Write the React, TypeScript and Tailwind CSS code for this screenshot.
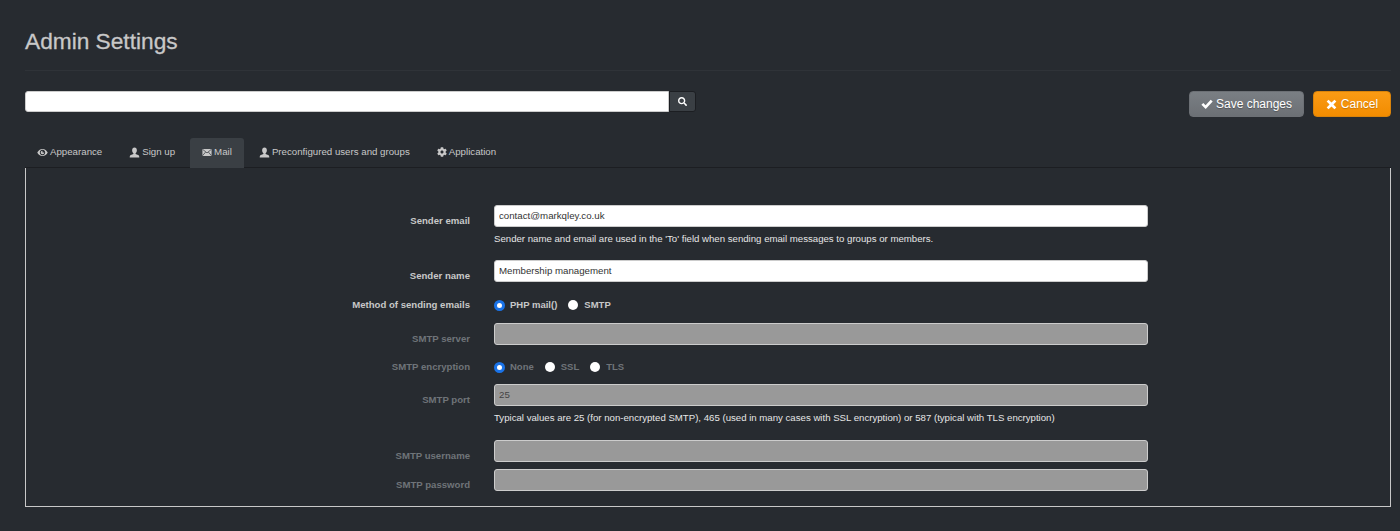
import { FaCog, FaSearch } from 'react-icons/fa';
import type { ReactNode } from 'react';

function EyeIcon() {
  return (
    <svg viewBox="0 0 12 10" className="h-[9px] w-[11px]" fill="currentColor">
      <path d="M6 1C3.400 1 1.300 2.800.2 5c1.100 2.200 3.200 4 5.800 4s4.700-1.800 5.800-4C10.700 2.800 8.600 1 6 1zm0 7C4.300 8 3 6.700 3 5s1.300-3 3-3 3 1.300 3 3-1.300 3-3 3z" />
      <path d="M6 3a2 2 0 1 0 2 2H6z" />
    </svg>
  );
}

function UserIcon() {
  return (
    <svg viewBox="0 0 12 12" className="size-[11px]" fill="currentColor">
      <path d="M6 .5c1.700 0 2.600 1.300 2.600 3 0 1.400-.6 2.600-1.400 3.200v.9c1.800.6 4 1 4 2.900v1H.8v-1c0-1.900 2.200-2.300 4-2.900v-.9C4 6.100 3.400 4.900 3.400 3.500c0-1.700.9-3 2.600-3z" />
    </svg>
  );
}

function MailIcon() {
  return (
    <svg viewBox="0 0 12 10" className="h-[9px] w-[10px]">
      <rect x="0.5" y="0.8" width="11" height="8.4" fill="currentColor" />
      <path d="M.5 1 6 5.500 11.500 1M.5 9 4.300 4.500M11.500 9 7.700 4.500" fill="none" stroke="#3a3f44" strokeWidth="0.9" />
    </svg>
  );
}

function CheckIcon() {
  return (
    <svg viewBox="0 0 12 12" className="size-[12px]" fill="currentColor">
      <path d="M.4 6.800 2.300 4.900 4.600 7.200 9.700 1.700 11.700 3.600 4.700 11z" />
    </svg>
  );
}

function RemoveIcon() {
  return (
    <svg viewBox="0 0 12 12" className="size-[11px]" fill="currentColor">
      <path d="M2.800.7 6 3.900 9.200.7l2.100 2.100L8.100 6l3.200 3.200-2.100 2.100L6 8.100l-3.200 3.200-2.100-2.100L3.900 6 .7 2.800z" />
    </svg>
  );
}

const tabs = [
  { label: 'Appearance', icon: <EyeIcon /> },
  { label: 'Sign up', icon: <UserIcon /> },
  { label: 'Mail', icon: <MailIcon />, active: true },
  { label: 'Preconfigured users and groups', icon: <UserIcon /> },
  { label: 'Application', icon: <FaCog className="size-[10px]" /> },
];

function Row({ label, disabled, inline, className, children }: { label: string; disabled?: boolean; inline?: boolean; className?: string; children: ReactNode }) {
  return (
    <div className={`grid grid-cols-[444px_654px] gap-x-6 ${className ?? ''}`}>
      <label className={`text-right text-[9.6px] font-bold ${inline ? 'leading-[14px]' : 'pt-[9px] leading-[13px]'} ${disabled ? 'text-[#6f7479]' : 'text-[#c8c8c8]'}`}>{label}</label>
      <div>{children}</div>
    </div>
  );
}

function TextInput({ value, disabled }: { value?: string; disabled?: boolean }) {
  return (
    <input
      readOnly
      disabled={disabled}
      value={value ?? ''}
      className={`block h-[22px] w-full rounded-[3px] border border-[#cccccc] px-[4px] pb-[2px] text-[9.7px] ${disabled ? 'bg-[#999999] text-[#444444]' : 'bg-white text-[#333333]'}`}
    />
  );
}

function Radio({ label, checked, disabled }: { label: string; checked?: boolean; disabled?: boolean }) {
  return (
    <span className={`flex items-center ${checked ? 'gap-[5px]' : 'gap-[6px]'}`}>
      {checked ? (
        <span className="size-[11px] rounded-full border-[3px] border-[#1a73e8] bg-white" />
      ) : (
        <span className="size-[10px] rounded-full bg-white" />
      )}
      <span className={`text-[9.5px] font-bold ${disabled ? 'text-[#6f7479]' : 'text-[#c8c8c8]'}`}>{label}</span>
    </span>
  );
}

export default function App() {
  return (
    <div className="min-h-[531px] bg-[#272b30] font-['Liberation_Sans',Arial,sans-serif]">
      <div className="px-[25px] pt-[29px]">
        <h1 className="text-[22.7px] leading-[25px] text-[#c8c8c8] [-webkit-text-stroke:0.3px_#c8c8c8]">Admin Settings</h1>
      </div>
      <div className="mt-[16px] mr-[9px] ml-[25px] border-t border-[#2f3338]" />

      <div className="mt-[20px] mr-[9px] ml-[25px] flex items-start justify-between">
        <div className="flex">
          <input readOnly className="h-[21px] w-[644px] rounded-l-[3px] border border-[#cccccc] bg-white" />
          <button className="flex h-[21px] w-[27px] items-center justify-center rounded-r-[3px] border border-[#1c1e22] bg-[#3a3f44] text-white">
            <FaSearch className="size-[9px]" />
          </button>
        </div>
        <div className="flex gap-[9px]">
          <button className="flex h-[26px] w-[115px] items-center justify-center gap-[3px] rounded-[4px] border border-[#6c7075] bg-gradient-to-b from-[#7a7f84] to-[#6c7075] text-[12px] text-white [text-shadow:0_1px_1px_rgba(0,0,0,0.3)]">
            <CheckIcon />
            Save changes
          </button>
          <button className="flex h-[26px] w-[78px] items-center justify-center gap-[4px] rounded-[4px] border border-[#d9830a] bg-gradient-to-b from-[#fa9b14] to-[#f28c00] text-[12px] text-white [text-shadow:0_1px_1px_rgba(0,0,0,0.2)]">
            <RemoveIcon />
            Cancel
          </button>
        </div>
      </div>

      <div className="mt-[21px] mr-[9px] ml-[25px] flex h-[30px] gap-[3px] border-b border-[#1c1e22]">
        {tabs.map((tab) => (
          <div
            key={tab.label}
            className={`flex h-[30px] items-center gap-[2px] rounded-t-[3px] px-[12px] pb-[2px] text-[9.7px] text-[#c8c8c8] ${tab.active ? 'bg-[#3a3f44]' : ''}`}
          >
            {tab.icon}
            {tab.label}
          </div>
        ))}
      </div>

      <div className="mr-[9px] ml-[25px] h-[339px] border-x border-b border-[#c8c8c8] pt-[37px]">
        <Row label="Sender email">
          <TextInput value="contact@markqley.co.uk" />
          <p className="mt-[5px] text-[9.65px] leading-[13px] text-[#e6e6e6]">Sender name and email are used in the 'To' field when sending email messages to groups or members.</p>
        </Row>
        <Row label="Sender name" className="mt-[15px]">
          <TextInput value="Membership management" />
        </Row>
        <Row label="Method of sending emails" inline className="mt-[16px]">
          <div className="flex h-[14px] items-center gap-[11px]">
            <Radio label="PHP mail()" checked />
            <Radio label="SMTP" />
          </div>
        </Row>
        <Row label="SMTP server" disabled className="mt-[11px]">
          <TextInput disabled />
        </Row>
        <Row label="SMTP encryption" disabled inline className="mt-[15px]">
          <div className="flex h-[14px] items-center gap-[11px]">
            <Radio label="None" checked disabled />
            <Radio label="SSL" disabled />
            <Radio label="TLS" disabled />
          </div>
        </Row>
        <Row label="SMTP port" disabled className="mt-[10px]">
          <TextInput value="25" disabled />
          <p className="mt-[5px] text-[9.65px] leading-[13px] text-[#e6e6e6]">Typical values are 25 (for non-encrypted SMTP), 465 (used in many cases with SSL encryption) or 587 (typical with TLS encryption)</p>
        </Row>
        <Row label="SMTP username" disabled className="mt-[16px]">
          <TextInput disabled />
        </Row>
        <Row label="SMTP password" disabled className="mt-[7px]">
          <TextInput disabled />
        </Row>
      </div>
    </div>
  );
}
